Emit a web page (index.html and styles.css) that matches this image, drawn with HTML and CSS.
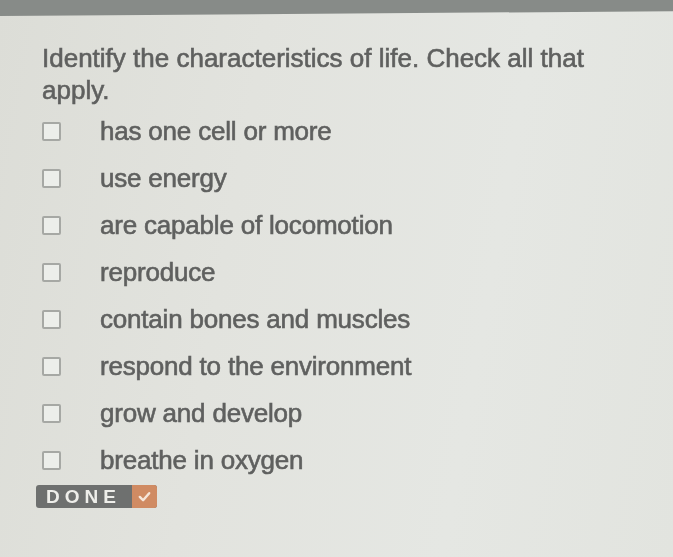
FILE: index.html
```html
<!DOCTYPE html>
<html lang="en">
<head>
<meta charset="utf-8">
<title>Characteristics of life</title>
<link rel="stylesheet" href="styles.css">
</head>
<body>
<div class="topbar"></div>
<main class="quiz">
  <p class="prompt">Identify the characteristics of life. Check all that apply.</p>
  <ul class="options">
    <li class="option"><span class="box"></span><span class="label">has one cell or more</span></li>
    <li class="option"><span class="box"></span><span class="label">use energy</span></li>
    <li class="option"><span class="box"></span><span class="label">are capable of locomotion</span></li>
    <li class="option"><span class="box"></span><span class="label">reproduce</span></li>
    <li class="option"><span class="box"></span><span class="label">contain bones and muscles</span></li>
    <li class="option"><span class="box"></span><span class="label">respond to the environment</span></li>
    <li class="option"><span class="box"></span><span class="label">grow and develop</span></li>
    <li class="option"><span class="box"></span><span class="label">breathe in oxygen</span></li>
  </ul>
  <button class="done" type="button">
    <span class="done-text">DONE</span>
    <span class="done-check">
      <svg viewBox="0 0 16 16" width="15" height="15"><path d="M3 8.5 L6.5 12 L13 4.5" fill="none" stroke="#f6e6da" stroke-width="2.6" stroke-linecap="round" stroke-linejoin="round"/></svg>
    </span>
  </button>
</main>
</body>
</html>
```

FILE: styles.css
```css
html, body {
  margin: 0;
  padding: 0;
}
body {
  width: 673px;
  height: 557px;
  overflow: hidden;
  background: linear-gradient(100deg, #dcddd7 0%, #e2e3de 35%, #e5e7e3 70%, #e2e4df 100%);
  font-family: "Liberation Sans", Arial, sans-serif;
  color: #5f605f;
}
.topbar {
  height: 16px;
  background: #878b88;
  clip-path: polygon(0 0, 100% 0, 100% 70%, 0 100%);
}
.quiz {
  padding: 26px 0 0 42px;
  filter: blur(0.6px);
}
.prompt {
  margin: 0;
  width: 560px;
  font-size: 26px;
  line-height: 32px;
  -webkit-text-stroke: 0.6px #5f605f;
}
.options {
  list-style: none;
  margin: 2px 0 0;
  padding: 0;
}
.option {
  display: flex;
  align-items: center;
  height: 47px;
}
.box {
  flex: none;
  width: 15px;
  height: 15px;
  border: 2px solid #a6a8a4;
  border-radius: 2px;
  background: #eceeea;
}
.label {
  margin-left: 39px;
  font-size: 26px;
  letter-spacing: -0.2px;
  -webkit-text-stroke: 0.6px #5f605f;
}
.done {
  display: flex;
  align-items: stretch;
  margin: 1px 0 0 -6px;
  padding: 0;
  border: 0;
  border-radius: 3px;
  overflow: hidden;
  height: 23px;
  background: #6e706f;
  font-family: "Liberation Sans", Arial, sans-serif;
}
.done-text {
  display: flex;
  align-items: center;
  width: 96px;
  padding-left: 10px;
  box-sizing: border-box;
  font-size: 19px;
  font-weight: bold;
  letter-spacing: 5px;
  color: #eeeeea;
}
.done-check {
  display: flex;
  align-items: center;
  justify-content: center;
  width: 25px;
  background: #d08b63;
}
```
